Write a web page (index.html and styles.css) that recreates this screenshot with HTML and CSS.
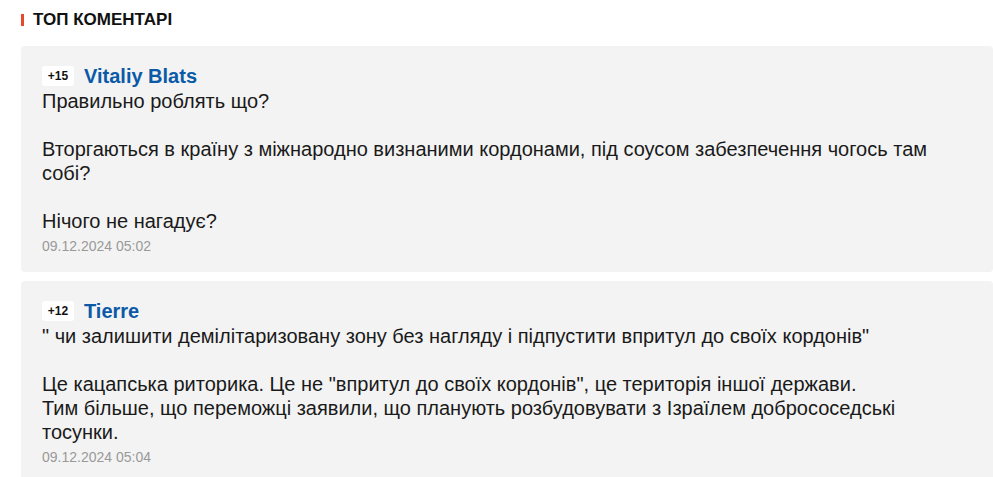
FILE: index.html
```html
<!DOCTYPE html>
<html lang="uk">
<head>
    <meta charset="UTF-8">
    <meta name="viewport" content="width=device-width, initial-scale=1.0">
    <title>Топ коментарі</title>
    <link rel="stylesheet" href="styles.css">
</head>
<body>
    <div class="top-comments">
        <h3 class="block-title">Топ коментарі</h3>

        <!-- коментар 1 -->
        <div class="comment">
            <div class="comment-head">
                <span class="rating">+15</span>
                <span class="author">Vitaliy Blats</span>
            </div>
            <div class="comment-text">Правильно роблять що?<br><br>Вторгаються в країну з міжнародно визнаними кордонами, під соусом забезпечення чогось там собі?<br><br>Нічого не нагадує?</div>
            <div class="comment-date">09.12.2024 05:02</div>
        </div>

        <!-- коментар 2 -->
        <div class="comment">
            <div class="comment-head">
                <span class="rating">+12</span>
                <span class="author">Tierre</span>
            </div>
            <div class="comment-text">" чи залишити демілітаризовану зону без нагляду і підпустити впритул до своїх кордонів"<br><br>Це кацапська риторика. Це не "впритул до своїх кордонів", це територія іншої держави.<br>Тим більше, що переможці заявили, що планують розбудовувати з Ізраїлем добрососедські тосунки.</div>
            <div class="comment-date">09.12.2024 05:04</div>
        </div>
    </div>
</body>
</html>
```

FILE: styles.css
```css
body {
    font-family: Arial, "Liberation Sans", sans-serif;
    margin: 0;
    background-color: #fff;
    color: #1a1a1a;
}
.top-comments {
    padding: 14px 0 0 21px;
}
.block-title {
    margin: 0 0 20px 0;
    padding-left: 9px;
    border-left: 3px solid #e8472b;
    font-size: 17px;
    line-height: 12px;
    font-weight: bold;
    text-transform: uppercase;
    color: #111;
}
.comment {
    background: #f3f3f3;
    border-radius: 4px;
    padding: 20px 20px 18px 21px;
    margin-bottom: 9px;
}
.comment-head {
    display: flex;
    align-items: center;
    gap: 10px;
    height: 20px;
    margin-bottom: 3px;
}
.rating {
    background: #fff;
    border-radius: 3px;
    width: 32px;
    height: 20px;
    line-height: 20px;
    text-align: center;
    font-size: 12px;
    font-weight: bold;
    color: #111;
}
.author {
    font-size: 20px;
    font-weight: bold;
    color: #0b5aa8;
}
.comment-text {
    font-size: 20px;
    line-height: 24px;
    color: #1a1a1a;
}
.comment-date {
    margin-top: 5px;
    font-size: 14px;
    line-height: 16px;
    color: #999;
}
```
